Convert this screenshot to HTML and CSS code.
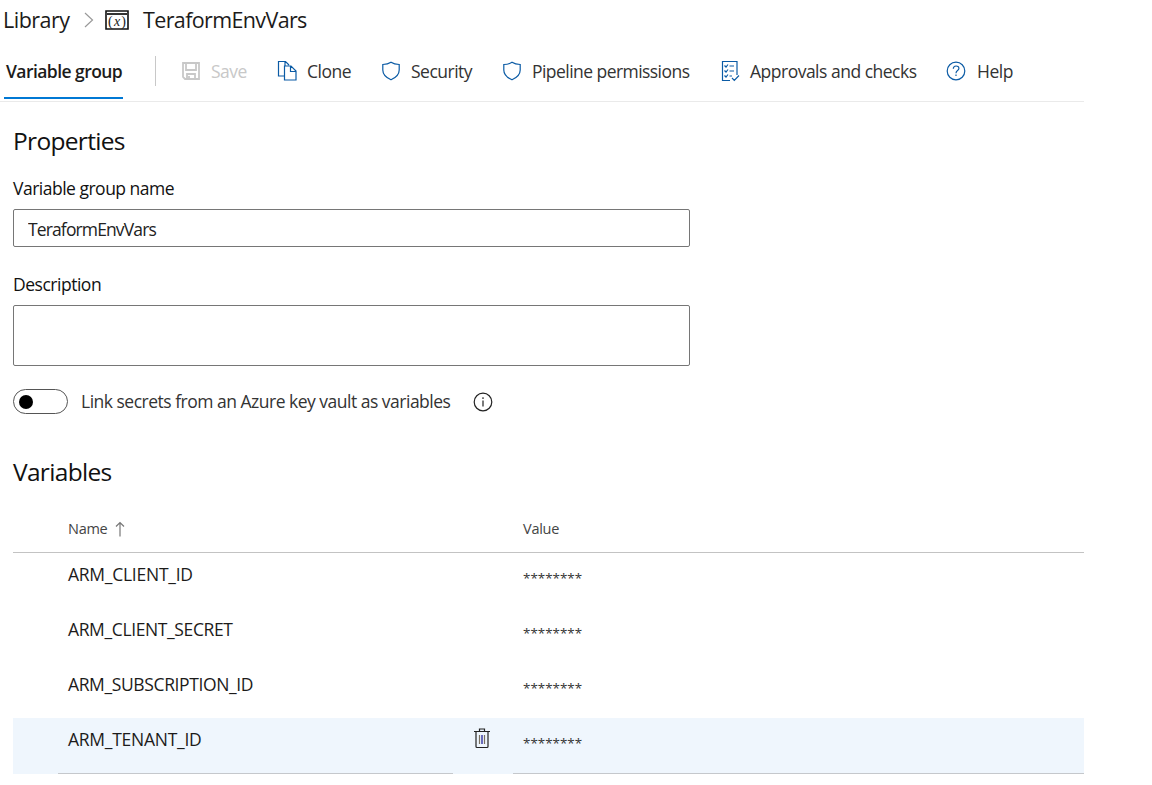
FILE: index.html
```html
<!DOCTYPE html>
<html lang="en">
<head>
<meta charset="utf-8">
<title>TeraformEnvVars - Library</title>
<link rel="stylesheet" href="styles.css">
</head>
<body>
<header class="crumbs">
  <span class="crumb crumb-root">Library</span>
  <svg class="chevron" width="10" height="16" viewBox="0 0 10 16"><path d="M1 1l7.500 7L1 15"/></svg>
  <svg class="group-icon" width="24" height="21" viewBox="0 0 24 21"><path d="M1 1h22v18H1z" fill="#fff" stroke="#111" stroke-width="1.600"/><path d="M2 4h20" stroke="#333" stroke-width="2"/><text x="12" y="15.500" text-anchor="middle" textLength="18">(<tspan font-style="italic">x</tspan>)</text></svg>
  <span class="crumb crumb-name">TeraformEnvVars</span>
</header>
<nav class="toolbar">
  <div class="tab"><span>Variable group</span></div>
  <div class="divider"></div>
  <div class="action save"><svg width="20" height="20" viewBox="0 0 20 20"><path d="M2 2h16v16H4l-2-2zM5 2v7h10V2M6 18v-5h8v5M8 15v3" stroke-width="1.800"/></svg><span>Save</span></div>
  <div class="action clone"><svg width="20" height="22" viewBox="0 0 20 22"><path d="M7.500 16H1.500V1.500h7l3.500 3.500M7.500 6H14l5 5v9H7.500zM13.500 6v5.500H19M8 2v4"/></svg><span>Clone</span></div>
  <div class="action security"><svg width="20" height="20" viewBox="0 0 20 20"><path d="M10 1.300C7.500 3 4.500 3.500 1.800 3.500V9c0 4.500 3.700 7.800 8.200 9.800 4.500-2 8.200-5.300 8.200-9.800V3.500C15.500 3.500 12.500 3 10 1.300z"/></svg><span>Security</span></div>
  <div class="action permissions"><svg width="20" height="20" viewBox="0 0 20 20"><path d="M10 1.300C7.500 3 4.500 3.500 1.800 3.500V9c0 4.500 3.700 7.800 8.200 9.800 4.500-2 8.200-5.300 8.200-9.800V3.500C15.500 3.500 12.500 3 10 1.300z"/></svg><span>Pipeline permissions</span></div>
  <div class="action approvals"><svg width="20" height="22" viewBox="0 0 20 22"><path d="M10 20.500H2.500v-19H17V15M9.500 6H14M9.500 11H14M9.500 16h2.500M4.500 5.500L6 7l2-2.500M4.500 10.500L6 12l2-2.500M4.500 15.500L6 17l2-2.500M12 18l2.300 2.300 4.700-4.800"/></svg><span>Approvals and checks</span></div>
  <div class="action help"><svg width="20" height="20" viewBox="0 0 20 20"><circle cx="10" cy="10" r="8.800"/><path d="M7.300 7.800c0-3.700 5.600-3.600 5.600-.4 0 2.200-2.900 2.200-2.900 4.800M10 13.500v1.600"/></svg><span>Help</span></div>
</nav>
<main class="content">
  <h2 class="heading props-heading">Properties</h2>
  <label class="label name-label" for="group-name">Variable group name</label>
  <input class="field" id="group-name" type="text" value="TeraformEnvVars">
  <label class="label desc-label" for="group-desc">Description</label>
  <textarea class="field area" id="group-desc"></textarea>
  <div class="toggle-row">
    <div class="toggle"><div class="knob"></div></div>
    <span class="toggle-text">Link secrets from an Azure key vault as variables</span>
    <svg class="info" width="20" height="20" viewBox="0 0 20 20"><circle cx="10" cy="10" r="8.800"/><path d="M10 8.500v6M10 5.300v1.700"/></svg>
  </div>
  <h2 class="heading vars-heading">Variables</h2>
  <section class="table">
    <div class="row head">
      <div class="name"><span>Name</span><svg width="10" height="16" viewBox="0 0 10 16"><path d="M5 15.500V1.500M1 5.500l4-4 4 4"/></svg></div>
      <div></div>
      <div class="value">Value</div>
    </div>
    <div class="row"><div class="name">ARM_CLIENT_ID</div><div></div><div class="value stars">********</div></div>
    <div class="row"><div class="name tight">ARM_CLIENT_SECRET</div><div></div><div class="value stars">********</div></div>
    <div class="row"><div class="name tight">ARM_SUBSCRIPTION_ID</div><div></div><div class="value stars">********</div></div>
    <div class="row selected"><div class="name">ARM_TENANT_ID</div><div class="trash"><svg width="18" height="22" viewBox="0 0 18 22"><path d="M1 4.500h16M6.500 4V2h5v2M3 5v14.500q0 1 1 1h10q1 0 1-1V5" stroke="#222"/><path d="M6.500 8v9M11.500 8v9" stroke="#7a7060"/><path d="M9 8v9" stroke="#101090"/></svg></div><div class="value stars">********</div></div>
  </section>
</main>
</body>
</html>
```
FILE: styles.css
```css
* { box-sizing: border-box; }
body { margin: 0; background: #fff; color: #1c1b1a; font: 17.5px/24px "Open Sans", "Noto Sans", sans-serif; letter-spacing: -0.5px; white-space: nowrap; overflow: hidden; }
svg { fill: none; stroke: currentColor; stroke-width: 1.2; flex: none; display: block; }
.crumbs { display: flex; align-items: center; height: 40px; padding-left: 3px; font-size: 21.5px; line-height: 40px; }
.crumb-root { width: 81px; letter-spacing: -0.5px; }
.chevron { color: #999; stroke-width: 1.2; margin-right: 11px; }
.group-icon { margin-right: 14px; }
.group-icon text { font: 14px "Liberation Serif", serif; letter-spacing: 0; fill: #222; stroke: none; }
.crumb-name { letter-spacing: -0.63px; }
.toolbar { display: flex; height: 62px; width: 1084px; border-bottom: 1px solid #eaeaea; padding-left: 4px; line-height: 64px; }
.tab { width: 119px; height: 59px; border-bottom: 2px solid #0078d4; padding-left: 2px; font-weight: 600; line-height: 62px; letter-spacing: -0.56px; }
.divider { width: 1px; height: 30px; background: #c8c8c8; margin: 16px 25px 0 32px; }
.action { display: flex; align-items: center; gap: 10px; height: 62px; color: #0b5ba5; }
.action span { color: #333; }
.action.save, .action.save span { color: #c8c8c8; }
.save { width: 96px; }
.clone { width: 104px; }
.security { width: 121px; }
.permissions { width: 218px; letter-spacing: -0.55px; }
.approvals { width: 226px; }
.help { gap: 11px; }
.content { width: 1084px; padding-left: 13px; }
.heading { margin: 0; font-size: 24.5px; font-weight: 400; line-height: 40px; letter-spacing: -0.68px; color: #111; }
.props-heading { padding-top: 19px; }
.label { display: block; height: 24px; line-height: 22px; color: #111; }
.name-label { margin: 16px 0 8px; }
.desc-label { margin: 26px 0 8px; letter-spacing: -0.48px; }
.field { display: block; width: 677px; height: 38px; margin: 0; padding: 1px 14px 0; border: 1px solid #767676; border-radius: 2px; background: #fff; color: #222; font: inherit; letter-spacing: -0.87px; outline: 0; resize: none; }
.area { height: 61px; }
.toggle-row { display: flex; align-items: center; height: 25px; margin-top: 23px; color: #333; }
.toggle { width: 55px; height: 25px; border: 1px solid #555; border-radius: 13px; padding: 5px; }
.knob { width: 14px; height: 14px; border-radius: 50%; background: #000; }
.toggle-text { width: 379px; margin: 0 13px; padding-bottom: 2px; }
.info { color: #222; margin-top: 1px; }
.vars-heading { padding-top: 38px; height: 90px; }
.table { width: 1071px; }
.row { display: grid; grid-template-columns: 440px 60px 1fr; height: 55px; }
.name { padding-left: 55px; line-height: 43px; letter-spacing: -0.26px; }
.name.tight { letter-spacing: -0.38px; }
.value { padding-left: 10px; line-height: 45px; letter-spacing: 0; }
.head { height: 49px; border-bottom: 1px solid #c3c3c3; font-size: 14.5px; color: #444; }
.head .name { display: flex; align-items: center; gap: 7px; height: 49px; }
.head .value { line-height: 49px; letter-spacing: -0.25px; }
.head svg { color: #777; }
.stars { font-size: 13.4px; line-height: 51px; color: #333; }
.selected { height: 56px; background: #eff6fd; }
.selected .name { border-bottom: 1px solid #c5c8cc; margin-left: 45px; padding-left: 10px; }
.selected .value { border-bottom: 1px solid #c5c8cc; }
.trash { padding: 9px 0 0 20px; }
```
